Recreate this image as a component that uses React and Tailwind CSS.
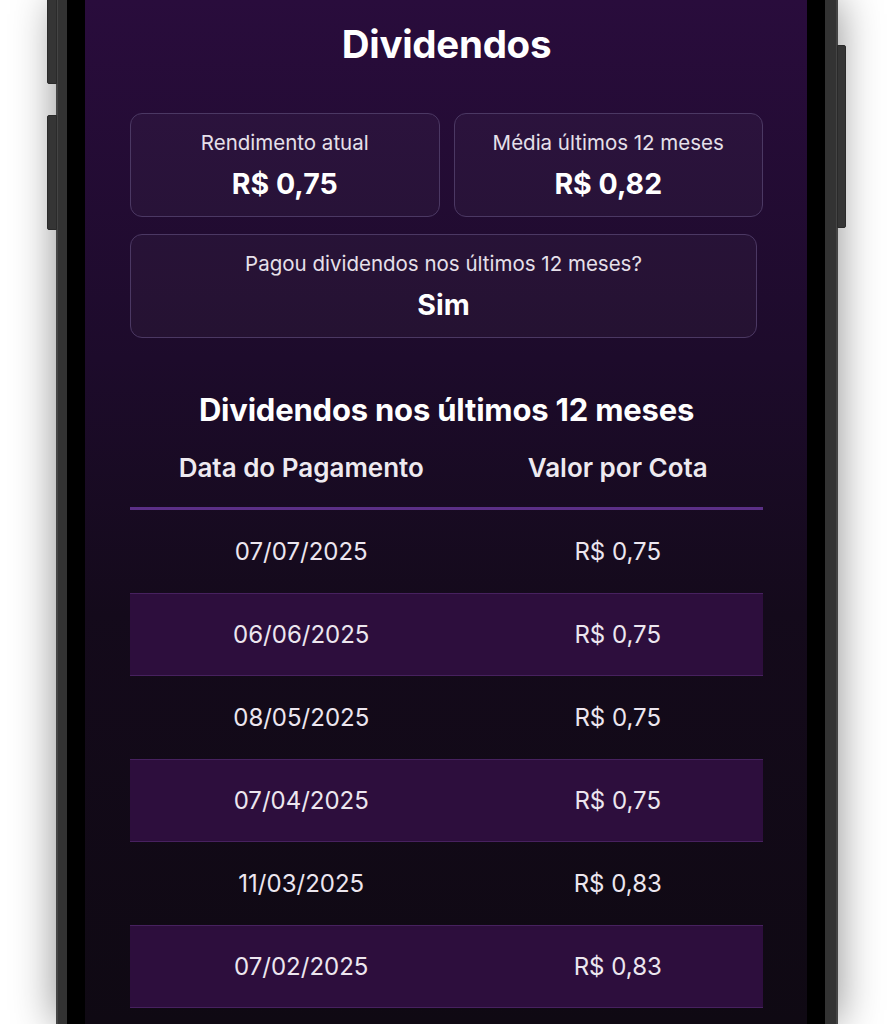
const rows = [
  { date: '07/07/2025', value: 'R$ 0,75' },
  { date: '06/06/2025', value: 'R$ 0,75' },
  { date: '08/05/2025', value: 'R$ 0,75' },
  { date: '07/04/2025', value: 'R$ 0,75' },
  { date: '11/03/2025', value: 'R$ 0,83' },
  { date: '07/02/2025', value: 'R$ 0,83' },
];

function StatCard({ label, value, className = '' }) {
  return (
    <div className={`h-[104px] rounded-[12px] border-[1.5px] border-[#4b3863] bg-white/[0.03] flex flex-col items-center pt-[16px] ${className}`}>
      <span className="text-[20.5px] leading-[25px] text-[#e6e0ea]">{label}</span>
      <span className="mt-[12px] text-[28.5px] leading-[34px] font-bold text-white">{value}</span>
    </div>
  );
}

export default function App() {
  return (
    <div className="w-[892px] h-[1024px] bg-white overflow-hidden font-['Inter','Noto_Sans',sans-serif]">
      <div className="relative ml-[56px] w-[782px] h-[1024px] bg-[#333] border-l-2 border-r-2 border-[#444] pl-[9px] pr-[11px] shadow-[0_0_40px_rgba(0,0,0,0.45)]">
        {/* side buttons */}
        <div className="absolute left-[-11px] top-[-10px] w-[10px] h-[94px] rounded-l-[2px] bg-[#353535] border border-[#2a2a2a]" />
        <div className="absolute left-[-11px] top-[115px] w-[10px] h-[115px] rounded-l-[2px] bg-[#353535] border border-[#2a2a2a]" />
        <div className="absolute right-[-10px] top-[45px] w-[9px] h-[183px] rounded-r-[2px] bg-[#353535] border border-[#2a2a2a]" />

        <div className="h-full bg-black px-[18px]">
          <div className="h-full bg-[linear-gradient(180deg,#290c3c_0%,#1d0b2b_35%,#140a1b_60%,#0f0913_100%)] pl-[45px] pr-[44px] text-white">
            <h1 className="h-[90px] flex items-center justify-center text-[38.5px] font-bold tracking-[-0.3px]">Dividendos</h1>

            <div className="mt-[23px] grid grid-cols-2 gap-[14px]">
              <StatCard label="Rendimento atual" value="R$ 0,75" />
              <StatCard label="Média últimos 12 meses" value="R$ 0,82" />
            </div>

            <StatCard className="mt-[17px] w-[627px]" label="Pagou dividendos nos últimos 12 meses?" value="Sim" />

            <h2 className="mt-[54px] text-center text-[31px] leading-[36px] font-bold tracking-[-0.2px]">Dividendos nos últimos 12 meses</h2>

            <div className="mt-[26px] grid grid-cols-2 pb-[25px] border-b-[3px] border-[#5b2f86] text-[26px] leading-[28px] font-semibold text-[#eeeaf0]">
              <div className="pl-[26px] text-center">Data do Pagamento</div>
              <div className="pl-[26px] text-center">Valor por Cota</div>
            </div>

            {rows.map((r, i) => (
              <div
                key={r.date}
                className={`h-[83px] grid grid-cols-2 items-center text-[24px] text-[#ece6ef] ${i % 2 === 1 ? 'bg-[#2d0e3d] border-y border-[#47215f]' : ''}`}
              >
                <div className="pl-[26px] text-center">{r.date}</div>
                <div className="pl-[26px] text-center">{r.value}</div>
              </div>
            ))}
          </div>
        </div>
      </div>
    </div>
  );
}
